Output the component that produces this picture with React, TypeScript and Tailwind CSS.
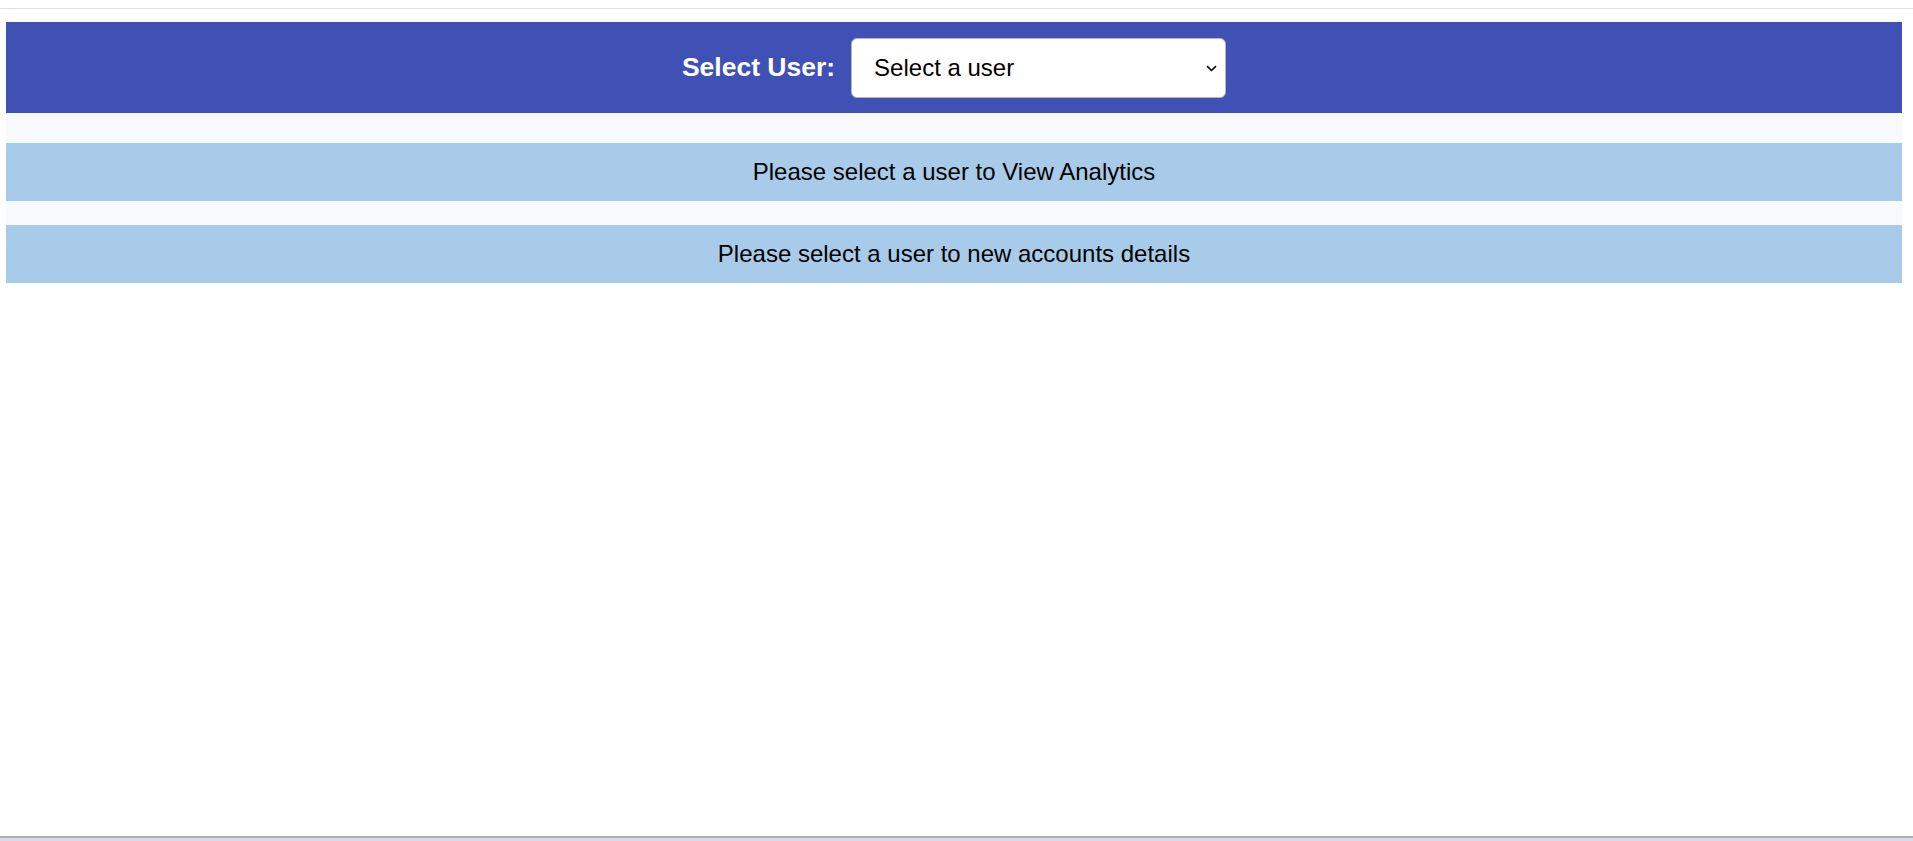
import React from "react";

export default function App() {
  return (
    <div className="flex min-h-screen flex-col bg-white" style={{ fontFamily: '"Liberation Sans", Arial, sans-serif' }}>
      <div className="h-[8px]" />
      <div className="h-px w-full bg-[#e0e0e0]" />
      <div className="h-[13px]" />
      <div className="ml-[6px] w-[1896px]">
        <div className="flex h-[91px] items-center justify-center gap-[16px] bg-[#3f51b5]">
          <label className="text-[26.5px] font-bold leading-none text-white">Select User:</label>
          <div className="relative h-[60px] w-[375px]">
            <select
              defaultValue=""
              className="h-full w-full appearance-none rounded-[6px] border border-[#b5b5b5] bg-white pl-[22px] pr-[30px] text-[24px] text-black outline-none"
              style={{ fontFamily: '"Liberation Sans", Arial, sans-serif' }}
            >
              <option value="">Select a user</option>
            </select>
            <svg
              className="pointer-events-none absolute right-[9px] top-[27px]"
              width="11"
              height="7"
              viewBox="0 0 11 7"
              fill="none"
            >
              <path d="M1 1.2l4.5 4.3 4.5-4.3" stroke="#000" strokeWidth="1.6" />
            </svg>
          </div>
        </div>
        <div className="flex flex-col gap-[24px] bg-[#f8f9fa] pt-[30px]">
          <div className="flex h-[58px] items-center justify-center bg-[#a8cbe9] text-[24px] text-black">
            Please select a user to View Analytics
          </div>
          <div className="flex h-[58px] items-center justify-center bg-[#a8cbe9] text-[24px] text-black">
            Please select a user to new accounts details
          </div>
        </div>
      </div>
      <div className="mt-auto h-[2px] w-full bg-[#aeaeb6]" />
      <div className="h-[3px] w-full bg-[#d9dbe9]" />
    </div>
  );
}
